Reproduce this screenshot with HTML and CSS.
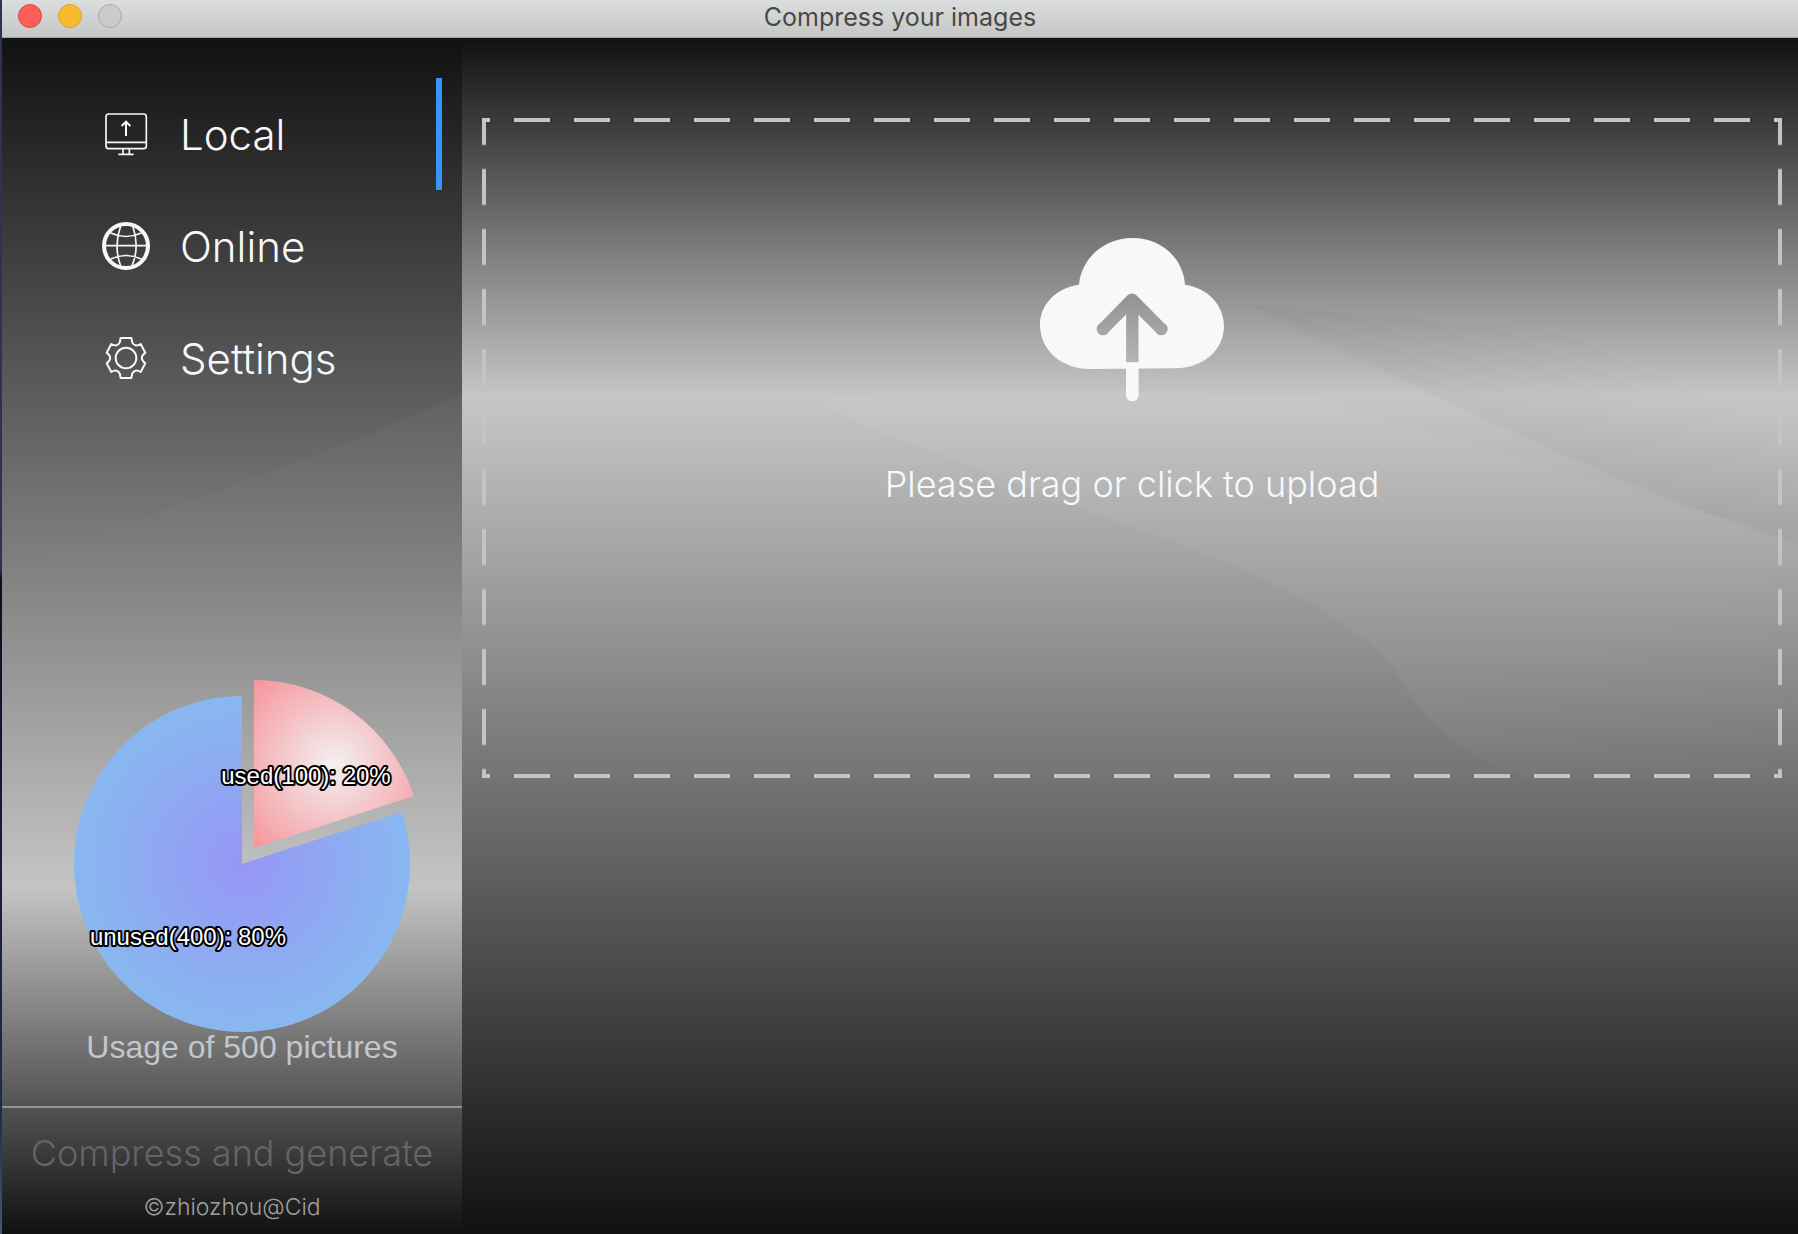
FILE: index.html
```html
<!DOCTYPE html>
<html lang="en">
<head>
<meta charset="utf-8">
<title>Compress your images</title>
<link rel="stylesheet" href="styles.css">
</head>
<body>
<div class="window">
  <header class="titlebar">
    <div class="lights">
      <button class="light light-close" aria-label="Close"></button>
      <button class="light light-min" aria-label="Minimize"></button>
      <button class="light light-zoom" aria-label="Zoom" disabled></button>
    </div>
    <h1 class="title">Compress your images</h1>
  </header>
  <div class="content">
    <aside class="sidebar">
      <svg class="sheen" viewBox="0 0 460 1196" preserveAspectRatio="none" aria-hidden="true">
        <path d="M0 536C150 470 330 420 460 355V560H0Z" fill="url(#sheen-side)"/>
        <defs><linearGradient id="sheen-side" x1="0" y1="0" x2="0" y2="1"><stop offset="0" stop-color="#fff" stop-opacity=".03"/><stop offset="1" stop-color="#fff" stop-opacity="0"/></linearGradient></defs>
      </svg>
      <nav class="nav">
        <a class="nav-item active" href="#local">
          <svg class="icon" viewBox="-72 -72 144 144" fill="none" stroke="#f7f8fa" stroke-width="5" aria-hidden="true">
            <rect x="-60" y="-60" width="121" height="104" rx="8"/>
            <path d="M-61 25H61M-9 44V60M10 44V60M-23 61H23"/>
            <path d="M0 6V-36M-13 -24L0 -37L13 -24" stroke-width="6"/>
          </svg>
          <span>Local</span>
        </a>
        <a class="nav-item" href="#online">
          <svg class="icon" viewBox="-72 -72 144 144" fill="none" stroke="#f7f8fa" stroke-width="5" aria-hidden="true">
            <circle r="66" stroke-width="12"/>
            <path d="M-64 -1H64M-46 -39Q0 -18 46 -39M-46 39Q0 18 46 39M-16 -60Q-38 0 -16 60M20 -60Q42 0 18 60"/>
          </svg>
          <span>Online</span>
        </a>
        <a class="nav-item" href="#settings">
          <svg class="icon" viewBox="-72 -72 144 144" fill="none" stroke="#f7f8fa" stroke-width="6" stroke-linejoin="round" aria-hidden="true">
            <circle r="31"/>
            <path d="M-16 -60H16L19 -46Q26 -32 44 -42L58 -16Q37 0 58 16L44 42Q26 32 19 46L16 60H-16L-19 46Q-26 32 -44 42L-58 16Q-37 0 -58 -16L-44 -42Q-26 -32 -19 -46Z"/>
          </svg>
          <span>Settings</span>
        </a>
      </nav>
      <figure class="usage">
        <svg class="pie" viewBox="22 670 440 360" role="img" aria-label="Usage chart">
          <defs>
            <radialGradient id="unused" gradientUnits="userSpaceOnUse" cx="242" cy="863" r="168">
              <stop offset="0" stop-color="#9696f5"/><stop offset="1" stop-color="#88b8f0"/>
            </radialGradient>
            <radialGradient id="used" gradientUnits="userSpaceOnUse" cx="334" cy="763" r="112">
              <stop offset="0" stop-color="#f3f0f2"/><stop offset="1" stop-color="#f5989d"/>
            </radialGradient>
          </defs>
          <path d="M242 863L401.8 811.1A168 168 0 1 1 242 695Z" fill="url(#unused)"/>
          <path d="M254 847V679A168 168 0 0 1 413.8 795.1Z" fill="url(#used)"/>
          <text class="pie-label" x="306" y="783">used(100): 20%</text>
          <text class="pie-label" x="188" y="944">unused(400): 80%</text>
        </svg>
        <figcaption class="caption">Usage of 500 pictures</figcaption>
      </figure>
      <footer class="footer">
        <button class="compress" disabled>Compress and generate</button>
        <p class="credit">©zhiozhou@Cid</p>
      </footer>
    </aside>
    <main class="main">
      <svg class="sheen" viewBox="462 38 1336 1196" preserveAspectRatio="none" aria-hidden="true">
        <defs>
          <linearGradient id="sheen-a" x1="0" y1="0" x2="1" y2="1"><stop offset="0" stop-color="#fff" stop-opacity=".04"/><stop offset=".7" stop-color="#fff" stop-opacity=".04"/><stop offset="1" stop-color="#fff" stop-opacity="0"/></linearGradient>
          <linearGradient id="sheen-b" gradientUnits="userSpaceOnUse" x1="1524" y1="425" x2="1570" y2="325"><stop offset="0" stop-color="#000" stop-opacity=".03"/><stop offset="1" stop-color="#000" stop-opacity="0"/></linearGradient>
        </defs>
        <path d="M828 401C850 384 1100 392 1300 394L1798 540V780H1530C1420 740 1412 690 1390 664C1310 576 1130 530 1038 493C950 455 830 420 828 401Z" fill="url(#sheen-a)"/>
        <path d="M1250 305C1420 390 1600 480 1798 545V350Z" fill="url(#sheen-b)"/>
      </svg>
      <label class="dropzone" for="files">
        <input class="file" type="file" id="files" multiple>
        <svg class="cloud" viewBox="60 84 552 492" aria-hidden="true">
          <defs>
            <mask id="arrow" maskUnits="userSpaceOnUse" x="60" y="84" width="552" height="492">
              <rect x="60" y="84" width="552" height="492" fill="#fff"/>
              <path d="M249 357L336 269L424 357M337 275V457" fill="none" stroke="#000" stroke-width="37" stroke-linejoin="round"/>
              <circle cx="249" cy="357" r="19"/><circle cx="424" cy="357" r="19"/>
            </mask>
          </defs>
          <path mask="url(#arrow)" fill="#f7f8fa" d="M177 224C184 145 252 84 338 84C424 84 490 145 495 224C562 233 612 285 612 348C612 420 550 475 465 475L210 477C125 477 60 420 60 345C60 283 108 234 177 224Z"/>
          <path fill="#f7f8fa" d="M318 458H356V555A19 19 0 0 1 318 555Z"/>
        </svg>
        <span class="hint">Please drag or click to upload</span>
      </label>
    </main>
  </div>
</div>
</body>
</html>
```

FILE: styles.css
```css
* {
  box-sizing: border-box;
}

body {
  margin: 0;
  background: linear-gradient(#2a3556 0, #2a3556 46%, #0b1020 47%, #1c2c50 90%, #46557c 100%);
  font-family: Inter, "Liberation Sans", sans-serif;
  color: #f7f8fa;
}

.window {
  display: flex;
  flex-direction: column;
  min-height: 100vh;
  margin-left: 2px;
}

.titlebar {
  display: grid;
  grid-template-columns: 1fr auto 1fr;
  align-items: start;
  height: 38px;
  padding: 0 16px;
  background: linear-gradient(#dcddde, #c5c6c6);
  border-bottom: 1px solid #a3a3a3;
}

.lights {
  display: flex;
  gap: 16px;
  padding-top: 4px;
}

.light {
  width: 24px;
  height: 24px;
  padding: 0;
  border: 1px solid;
  border-radius: 50%;
}

.light-close {
  background: #fb6058;
  border-color: #e0463f;
}

.light-min {
  background: #f8bb30;
  border-color: #dfa023;
}

.light-zoom {
  background: #cbcbcc;
  border-color: #a9a9a9;
}

.title {
  margin: 0;
  font-size: 25px;
  line-height: 34px;
  font-weight: 400;
  color: #484848;
}

.content {
  display: flex;
  flex: 1;
}

.sidebar {
  position: relative;
  display: flex;
  flex-direction: column;
  flex: 0 0 460px;
  background: linear-gradient(#111, #c4c4c4 71%, #111);
}

.sheen {
  position: absolute;
  inset: 0;
  width: 100%;
  height: 100%;
}

.nav {
  position: relative;
  margin: 40px 20px 40px 0;
}

.nav-item {
  display: flex;
  align-items: center;
  gap: 30px;
  height: 112px;
  padding-left: 100px;
  border-right: 6px solid transparent;
  font-size: 42px;
  font-weight: 350;
  color: inherit;
  text-decoration: none;
}

.nav-item.active {
  border-color: #3296fa;
}

.icon {
  width: 48px;
  height: 48px;
}

.usage {
  position: relative;
  margin: auto 0 0 20px;
  padding-bottom: 43px;
}

.pie {
  display: block;
  width: 100%;
  overflow: visible;
}

.pie-label {
  font: 24px "Liberation Sans", Arial, sans-serif;
  text-anchor: middle;
  fill: #fff;
  stroke: #000;
  stroke-width: 4px;
  stroke-linejoin: round;
  paint-order: stroke;
}

.caption {
  font: 32px/32px "Liberation Sans", Arial, sans-serif;
  text-align: center;
  color: #c3c6cc;
}

.footer {
  position: relative;
  display: flex;
  flex-direction: column;
  align-items: center;
  gap: 18px;
  padding: 21px 0 15px;
  border-top: 2px solid #929292;
}

.compress {
  height: 48px;
  padding: 0;
  border: 0;
  background: none;
  font: 300 36px/48px Inter, "Liberation Sans", sans-serif;
  color: #656565;
}

.credit {
  margin: 0;
  font-size: 23px;
  line-height: 24px;
  font-weight: 300;
  color: #a0a0a0;
}

.main {
  position: relative;
  flex: 1;
  padding: 80px 16px 80px 20px;
  background: linear-gradient(#111, #c6c6c6 30%, #111);
}

.dropzone {
  --dash: #c4c4c4;
  position: relative;
  display: flex;
  flex-direction: column;
  align-items: center;
  gap: 56px;
  height: 660px;
  padding-top: 120px;
  background:
    repeating-linear-gradient(90deg, var(--dash) 0 8px, transparent 8px 32px, var(--dash) 32px 60px) top / 100% 4px no-repeat,
    repeating-linear-gradient(90deg, var(--dash) 0 8px, transparent 8px 32px, var(--dash) 32px 60px) bottom / 100% 4px no-repeat,
    repeating-linear-gradient(var(--dash) 0 26px, transparent 28px 50px, var(--dash) 52px 60px) left / 4px 100% no-repeat,
    repeating-linear-gradient(var(--dash) 0 26px, transparent 28px 50px, var(--dash) 52px 60px) right / 4px 100% no-repeat;
  cursor: pointer;
}

.file {
  position: absolute;
  width: 1px;
  height: 1px;
  opacity: 0;
}

.cloud {
  width: 184px;
  height: 164px;
}

.hint {
  font-size: 36px;
  line-height: 52px;
  font-weight: 350;
}
```
